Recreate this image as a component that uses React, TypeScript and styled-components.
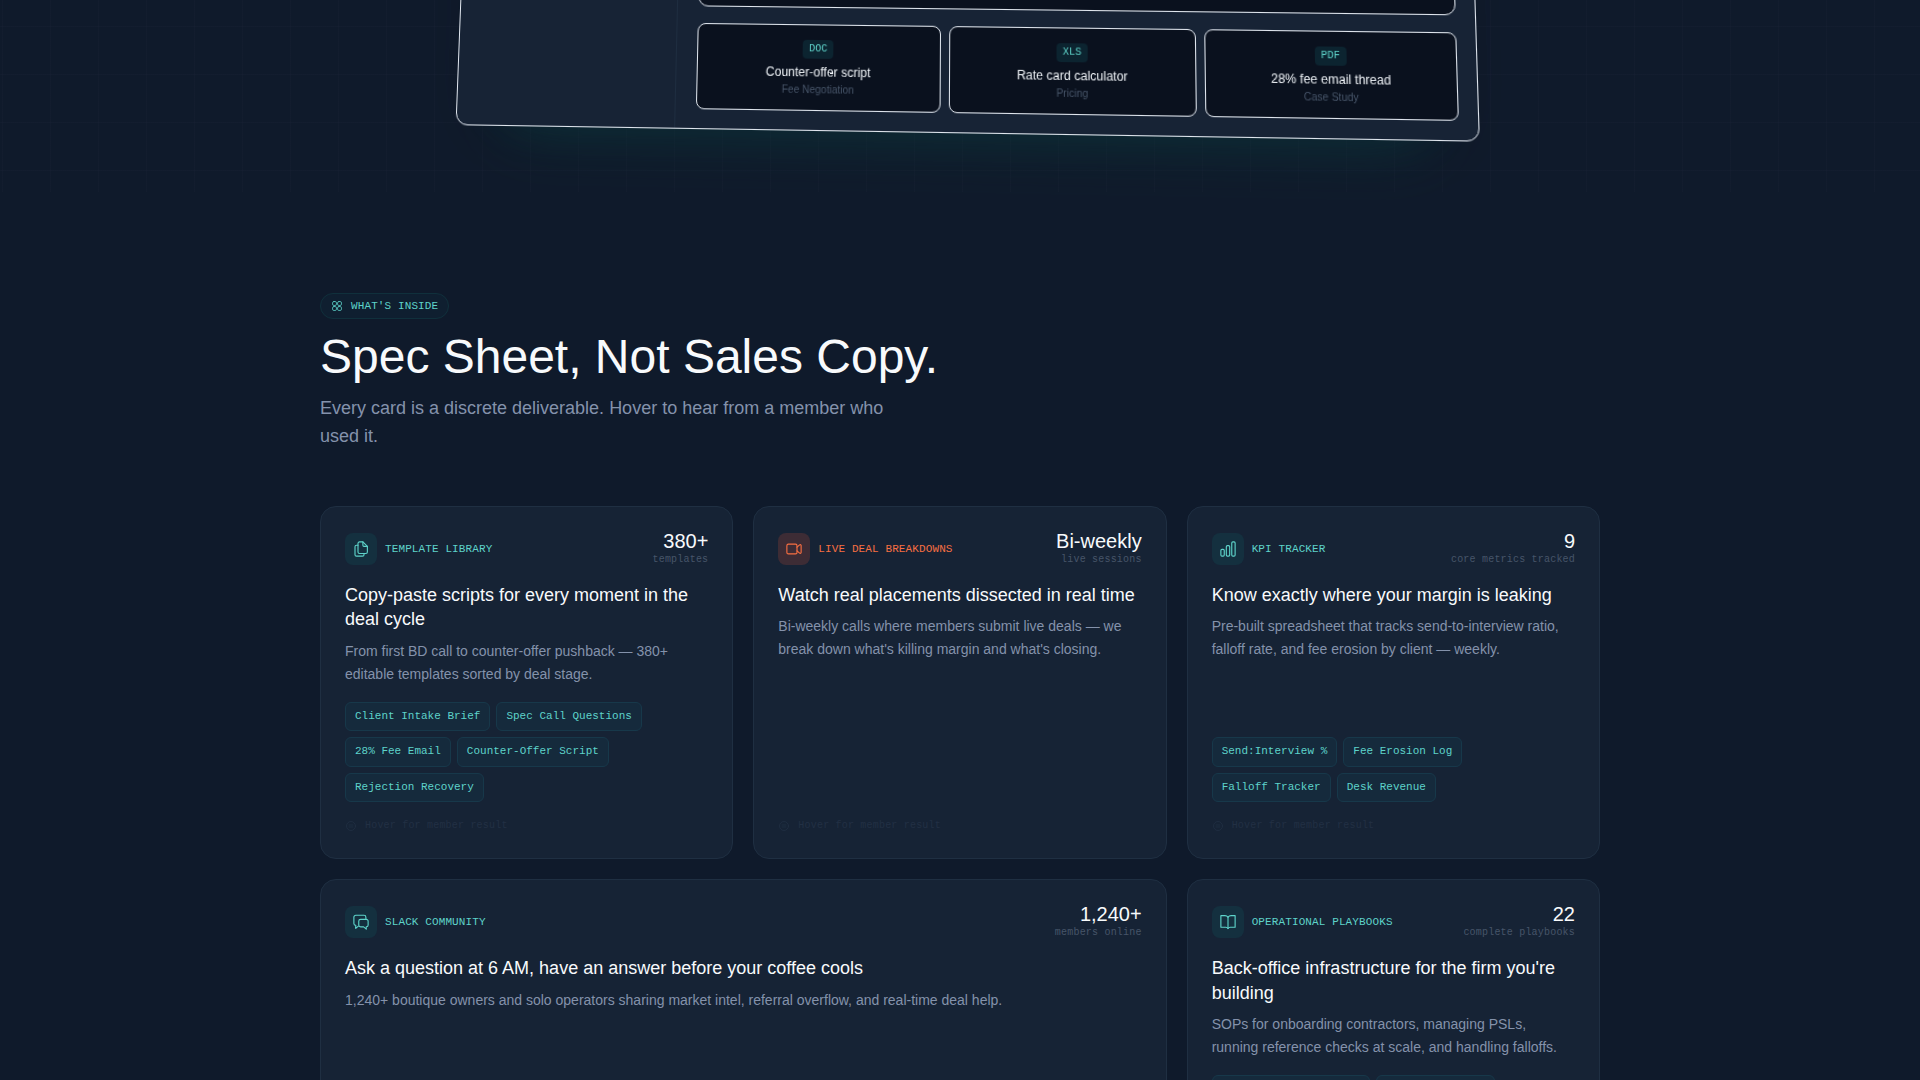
import React from "react";
import styled, { createGlobalStyle } from "styled-components";

const sans = `"Liberation Sans", Arial, sans-serif`;
const mono = `"Liberation Mono", "Courier New", monospace`;

const tones = {
  teal: { text: "#5ed3ca", tint: "#14303f" },
  orange: { text: "#f86f42", tint: "#3d2c35" },
};
type Tone = keyof typeof tones;

const GlobalStyle = createGlobalStyle`
  *, *::before, *::after { box-sizing: border-box; }
  html { scrollbar-width: none; overflow-x: hidden; }
  body { margin: 0; background: #0f1a2b; color: #f8fafc; font-family: ${sans}; }
  h2, h3, p, ul { margin: 0; padding: 0; font-weight: 400; }
`;

const Page = styled.main`
  padding-bottom: 96px;
`;

/* ---------- hero mock-up ---------- */

const Hero = styled.section`
  display: flex;
  flex-direction: column;
  justify-content: flex-end;
  align-items: center;
  height: 192px;
  padding: 0 24px 70px;
  background-image:
    linear-gradient(rgba(148, 163, 184, 0.024) 1px, transparent 1px),
    linear-gradient(90deg, rgba(148, 163, 184, 0.024) 1px, transparent 1px);
  background-size: 48px 48px;
  background-position: 2px 26px;
`;

const Panel = styled.div`
  display: grid;
  grid-template-columns: 217px 1fr;
  width: 100%;
  max-width: 989px;
  min-height: 280px;
  flex-shrink: 0;
  border: 1px solid #e2e8f0;
  border-radius: 12px;
  background: #172335;
  transform-origin: 42% calc(100% - 450px);
  transform: perspective(2000px) rotateY(-4deg) rotateX(8deg);
  box-shadow: 0 56px 60px -54px rgba(16, 110, 100, 0.3), 0 30px 60px -30px rgba(6, 24, 30, 0.4);
`;

const Sidebar = styled.div`
  border-right: 1px solid #1e2d40;
`;

const PanelMain = styled.div`
  display: flex;
  flex-direction: column;
  gap: 16px;
  padding: 20px 18px 18px 20px;
`;

const Screen = styled.div`
  flex: 1;
  border: 1px solid #e2e8f0;
  border-radius: 10px;
  background: #0a111e;
`;

const Files = styled.ul`
  display: grid;
  grid-template-columns: repeat(3, 1fr);
  gap: 8px;
  list-style: none;
`;

const File = styled.li`
  display: flex;
  flex-direction: column;
  align-items: center;
  padding: 14px 12px 11px;
  border: 1px solid #e2e8f0;
  border-radius: 8px;
  background: #0a111e;
`;

const FileType = styled.span`
  padding: 0 6px;
  margin-bottom: 4px;
  border-radius: 4px;
  background: #0c2430;
  color: #5ed3ca;
  font: 10px/18px ${mono};
`;

const FileName = styled.span`
  font-size: 12px;
  line-height: 18px;
  color: #f1f5f9;
`;

const FileGroup = styled.span`
  font-size: 10px;
  line-height: 16px;
  color: #475569;
`;

/* ---------- what's inside ---------- */

const Section = styled.section`
  max-width: 1328px;
  margin: 0 auto;
  padding: 101px 24px 0;
`;

const Pill = styled.span`
  display: flex;
  align-items: center;
  gap: 8px;
  width: fit-content;
  height: 26px;
  padding: 0 10px;
  border: 1px solid #10303c;
  border-radius: 13px;
  background: #0f1f30;
  color: #5ed3ca;
  font: 11px/16px ${mono};
  letter-spacing: 0.01em;
  text-transform: uppercase;
`;

const Heading = styled.h2`
  margin-top: 12px;
  font-size: 48px;
  line-height: 52px;
`;

const Lead = styled.p`
  max-width: 580px;
  margin-top: 11px;
  color: #8492ab;
  font-size: 18px;
  line-height: 28px;
`;

const Grid = styled.div`
  display: grid;
  grid-template-columns: repeat(3, 1fr);
  gap: 20px;
  margin-top: 56px;
`;

const Card = styled.article<{ $span: number }>`
  display: flex;
  flex-direction: column;
  grid-column: span ${(p) => p.$span};
  padding: 24px;
  border: 1px solid #1f2f42;
  border-radius: 16px;
  background: #162335;
`;

const CardHead = styled.header`
  display: flex;
  align-items: center;
  justify-content: space-between;
  height: 36px;
  margin-bottom: 16px;
`;

const Category = styled.div<{ $tone: Tone }>`
  display: flex;
  align-items: center;
  gap: 8px;
  color: ${(p) => tones[p.$tone].text};
  font: 11px/16px ${mono};
  letter-spacing: 0.01em;
  text-transform: uppercase;
`;

const IconBox = styled.span<{ $tone: Tone }>`
  display: grid;
  place-items: center;
  width: 32px;
  height: 32px;
  border-radius: 8px;
  background: ${(p) => tones[p.$tone].tint};
`;

const Stat = styled.div`
  text-align: right;
`;

const StatValue = styled.div`
  font-size: 20px;
  line-height: 22px;
`;

const StatLabel = styled.div`
  color: #475569;
  font: 10px/16px ${mono};
  letter-spacing: 0.02em;
`;

const CardTitle = styled.h3`
  margin-bottom: 8px;
  font-size: 18px;
  line-height: 1.35;
`;

const CardText = styled.p`
  margin-bottom: 16px;
  color: #8492ab;
  font-size: 14px;
  line-height: 1.65;
`;

const CardFoot = styled.footer`
  margin-top: auto;
`;

const Tags = styled.ul`
  display: flex;
  flex-wrap: wrap;
  gap: 6px;
  list-style: none;
`;

const Tag = styled.li`
  padding: 5px 9px 6px;
  border: 1px solid #17384a;
  border-radius: 6px;
  background: #152a3c;
  color: #5ed3ca;
  font: 11px/1.5 ${mono};
`;

const Hint = styled.p`
  display: flex;
  align-items: center;
  gap: 8px;
  margin-top: 16px;
  color: #223044;
  font: 10px/16px ${mono};
  letter-spacing: 0.02em;
`;

/* ---------- icons ---------- */

const glyphs = {
  grid: (
    <>
      <rect x="3" y="3" width="8" height="8" rx="3" />
      <rect x="13" y="3" width="8" height="8" rx="3" />
      <rect x="3" y="13" width="8" height="8" rx="3" />
      <rect x="13" y="13" width="8" height="8" rx="3" />
    </>
  ),
  copy: (
    <>
      <path d="M14.500 2.500H10A2 2 0 0 0 8 4.500v11.500a2 2 0 0 0 2 2h8.500a2 2 0 0 0 2-2V8.500z" />
      <path d="M14.500 2.500v4.500a1.500 1.500 0 0 0 1.500 1.500h4.500" />
      <path d="M8 7H6a2 2 0 0 0-2 2v10.500a2 2 0 0 0 2 2h8a2 2 0 0 0 2-2V18" />
    </>
  ),
  video: (
    <>
      <rect x="2.5" y="5.5" width="13.5" height="13" rx="2" />
      <path d="M16 9.500l3.500-3c.8-.6 2-.1 2 .9v9.200c0 1-1.200 1.500-2 .9l-3.500-3" />
    </>
  ),
  chart: (
    <>
      <rect x="2.5" y="12.5" width="4.5" height="9" rx="1.5" />
      <rect x="9.75" y="7.5" width="4.5" height="14" rx="1.5" />
      <rect x="17" y="2.5" width="4.5" height="19" rx="1.5" />
    </>
  ),
  chat: (
    <>
      <path d="M18.500 8V5.500A2.500 2.500 0 0 0 16 3H5a2.500 2.500 0 0 0-2.500 2.500V14A2.500 2.500 0 0 0 5 16.500v4l3.500-3" />
      <path d="M11.500 8.500H19a2.500 2.500 0 0 1 2.500 2.500v5a2.500 2.500 0 0 1-2.500 2.500v3l-3.500-3h-4A2.500 2.500 0 0 1 9 16v-5a2.500 2.500 0 0 1 2.500-2.500z" />
    </>
  ),
  book: (
    <>
      <path d="M12 5.500C11 4.200 9.500 3.500 8 3.500H2.500V19H9c1.500 0 2.500.6 3 1.800.5-1.200 1.500-1.800 3-1.800h6.500V3.500H16c-1.500 0-3 .7-4 2z" />
      <path d="M12 5.500v15" />
    </>
  ),
  quote: (
    <>
      <circle cx="12" cy="12" r="9" />
      <path d="M8 10h8M8 14h8" />
    </>
  ),
};

const Icon = ({ name, size = 18 }: { name: keyof typeof glyphs; size?: number }) => (
  <svg
    width={size}
    height={size}
    viewBox="0 0 24 24"
    fill="none"
    stroke="currentColor"
    strokeWidth="1.5"
    strokeLinecap="round"
    strokeLinejoin="round"
    aria-hidden="true"
  >
    {glyphs[name]}
  </svg>
);

/* ---------- content ---------- */

const files = [
  { type: "DOC", name: "Counter-offer script", group: "Fee Negotiation" },
  { type: "XLS", name: "Rate card calculator", group: "Pricing" },
  { type: "PDF", name: "28% fee email thread", group: "Case Study" },
];

type CardData = {
  icon: keyof typeof glyphs;
  tone?: Tone;
  span?: number;
  category: string;
  value: string;
  unit: string;
  title: string;
  text: string;
  tags?: string[];
};

const cards: CardData[] = [
  {
    icon: "copy",
    category: "Template Library",
    value: "380+",
    unit: "templates",
    title: "Copy-paste scripts for every moment in the deal cycle",
    text: "From first BD call to counter-offer pushback — 380+ editable templates sorted by deal stage.",
    tags: [
      "Client Intake Brief",
      "Spec Call Questions",
      "28% Fee Email",
      "Counter-Offer Script",
      "Rejection Recovery",
    ],
  },
  {
    icon: "video",
    tone: "orange",
    category: "Live Deal Breakdowns",
    value: "Bi-weekly",
    unit: "live sessions",
    title: "Watch real placements dissected in real time",
    text: "Bi-weekly calls where members submit live deals — we break down what's killing margin and what's closing.",
  },
  {
    icon: "chart",
    category: "KPI Tracker",
    value: "9",
    unit: "core metrics tracked",
    title: "Know exactly where your margin is leaking",
    text: "Pre-built spreadsheet that tracks send-to-interview ratio, falloff rate, and fee erosion by client — weekly.",
    tags: ["Send:Interview %", "Fee Erosion Log", "Falloff Tracker", "Desk Revenue"],
  },
  {
    icon: "chat",
    span: 2,
    category: "Slack Community",
    value: "1,240+",
    unit: "members online",
    title: "Ask a question at 6 AM, have an answer before your coffee cools",
    text: "1,240+ boutique owners and solo operators sharing market intel, referral overflow, and real-time deal help.",
  },
  {
    icon: "book",
    category: "Operational Playbooks",
    value: "22",
    unit: "complete playbooks",
    title: "Back-office infrastructure for the firm you're building",
    text: "SOPs for onboarding contractors, managing PSLs, running reference checks at scale, and handling falloffs.",
    tags: ["Contractor Onboarding", "Reference Check", "PSL Management"],
  },
];

const FeatureCard = ({ icon, tone = "teal", span = 1, ...c }: CardData) => (
  <Card $span={span}>
    <CardHead>
      <Category $tone={tone}>
        <IconBox $tone={tone}>
          <Icon name={icon} />
        </IconBox>
        {c.category}
      </Category>
      <Stat>
        <StatValue>{c.value}</StatValue>
        <StatLabel>{c.unit}</StatLabel>
      </Stat>
    </CardHead>
    <CardTitle>{c.title}</CardTitle>
    <CardText>{c.text}</CardText>
    <CardFoot>
      {c.tags && (
        <Tags>
          {c.tags.map((t) => (
            <Tag key={t}>{t}</Tag>
          ))}
        </Tags>
      )}
      <Hint>
        <Icon name="quote" size={12} />
        Hover for member result
      </Hint>
    </CardFoot>
  </Card>
);

export default function App() {
  return (
    <>
      <GlobalStyle />
      <Page>
        <Hero>
          <Panel>
            <Sidebar />
            <PanelMain>
              <Screen />
              <Files>
                {files.map((f) => (
                  <File key={f.type}>
                    <FileType>{f.type}</FileType>
                    <FileName>{f.name}</FileName>
                    <FileGroup>{f.group}</FileGroup>
                  </File>
                ))}
              </Files>
            </PanelMain>
          </Panel>
        </Hero>
        <Section>
          <Pill>
            <Icon name="grid" size={12} />
            What's Inside
          </Pill>
          <Heading>Spec Sheet, Not Sales Copy.</Heading>
          <Lead>Every card is a discrete deliverable. Hover to hear from a member who used it.</Lead>
          <Grid>
            {cards.map((c) => (
              <FeatureCard key={c.category} {...c} />
            ))}
          </Grid>
        </Section>
      </Page>
    </>
  );
}
